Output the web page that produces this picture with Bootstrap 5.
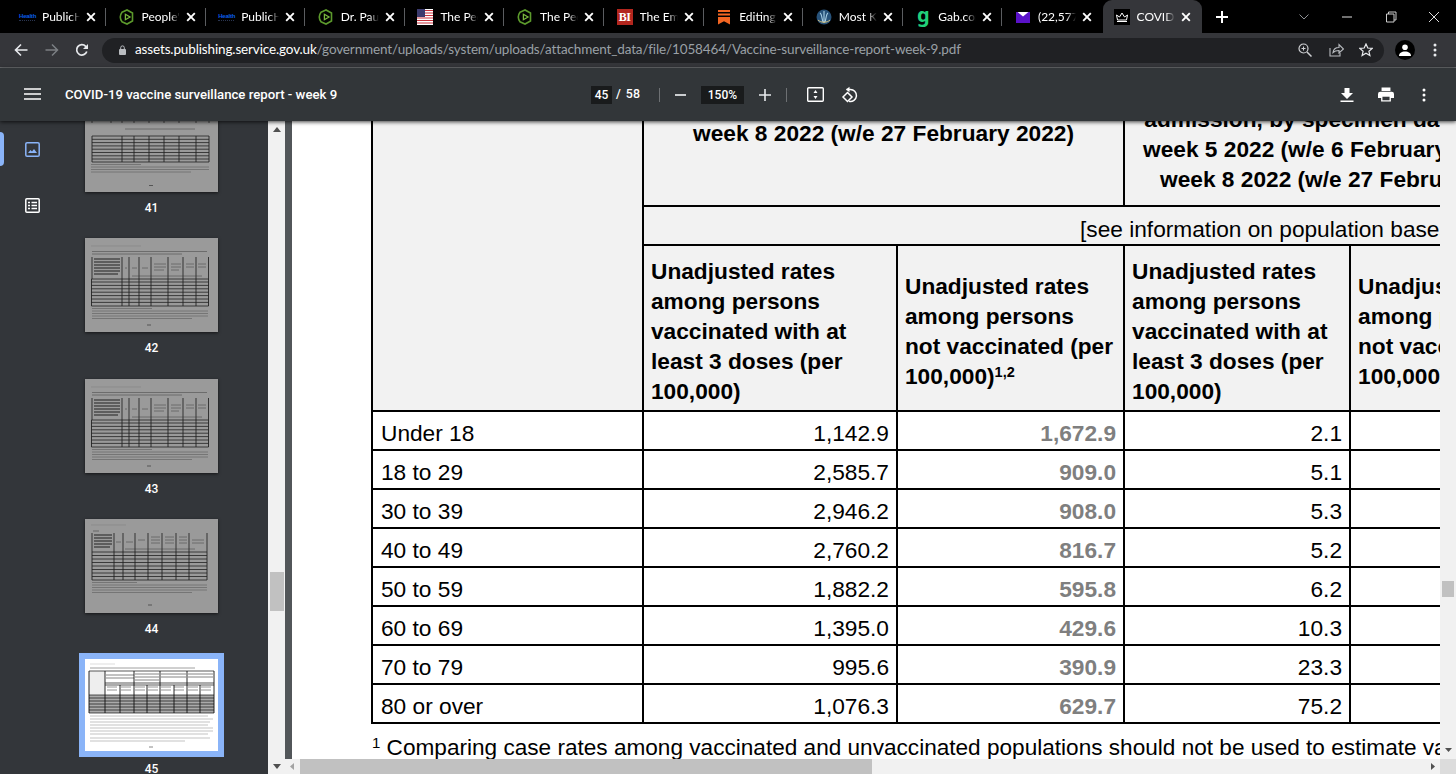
<!doctype html>
<html lang="en">
<head>
<meta charset="utf-8">
<title>COVID-19 vaccine surveillance report - week 9</title>
<link href="https://cdn.jsdelivr.net/npm/bootstrap@5.3.0/dist/css/bootstrap.min.css" rel="stylesheet">
<style>
html,body{height:100%;overflow:hidden;background:#000}
.shell{width:1456px;height:774px;overflow:hidden}
.tabbar{height:33px;background:#000;padding-left:8px;font:12px/1 "Lato",sans-serif;color:#fff}
.tabitem{width:99.6px;height:33px;padding-left:11px;flex:none}
.tabfav{width:16px;height:16px;flex:none;display:block}
.tabname{width:38px;margin-left:7px;margin-right:5px;overflow:hidden;white-space:nowrap;flex:none;-webkit-mask-image:linear-gradient(90deg,#000 74%,transparent);mask-image:linear-gradient(90deg,#000 74%,transparent)}
.tabx{width:12px;height:12px;flex:none}
.tabsep{width:1px;height:18px;background:#5b5d60;margin-left:8px;flex:none}
.tabactive{background:#35363a;border-radius:9px 9px 0 0;margin-left:-1px}
.healthfav{font:700 6px/1 "Liberation Sans",sans-serif;color:#0a5ce6;border-bottom:1px dotted #2a3550;height:8px;width:16px;text-align:center;letter-spacing:-.2px}
.bifav{background:#b3261e;color:#fff;font:700 12px/16px "Liberation Serif",serif;text-align:center;letter-spacing:-.5px}
.gabfav{color:#21d07a;font:700 20px/11px "Noto Sans",sans-serif;text-align:center;height:16px}
.newtab{width:14px;height:14px;margin-left:13px}
.winctl{width:174px;margin-left:auto;flex:none}
.winctl span{width:43.5px;display:flex;justify-content:center}
.addrbar{height:35px;background:#35363a;border-bottom:1px solid #6b6d70;padding:0 19px 0 14px}
.pill{height:25px;background:#202124;border-radius:13px;margin:0 11px 0 13px;padding:0 11px 0 17px;font:13.5px/1 "Lato",sans-serif;letter-spacing:-.134px;color:#fff;min-width:0}
.urlhost{color:#fff}.urlpath{color:#9aa0a6}
.urltext{margin-left:9px;white-space:nowrap}
.gapa{margin-left:17px}.gapb{margin-left:16px}.gapc{margin-left:15px}
.avatar{width:20px;height:20px;border-radius:50%;background:#000;flex:none}
.kebabtop{margin-left:18px}
.pdfbar{height:53px;background:#323639;color:#fff;font:500 13.2px/1 Roboto,sans-serif;position:relative;z-index:5;box-shadow:0 1px 4px rgba(0,0,0,.75);padding-left:24px}
.pdfleft{width:567px;flex:none}
.pdftitle{margin-left:24px;white-space:nowrap}
.numbox{background:#191b1c;height:18px;display:flex;align-items:center;justify-content:center;font-size:12px}
.boxpage{width:21px}.boxzoom{width:43px}
.pgsep{width:1px;height:14px;background:#6d7073}
.pdfctr{white-space:nowrap;font-size:12.4px}
.slasha{margin-left:4px}.slashb{margin-left:5px}
.sepa{margin-left:19px;margin-right:15px}
.minusa{margin-right:15px}
.plusa{margin-left:15px}
.sepb{margin-left:15px}
.fita{margin-left:20px}
.rota{margin-left:17px}
.pdfright{margin-left:auto;padding-right:30px}
.pdfprint{margin-left:24px}
.pdfkebab{margin-left:28px}
.workarea{height:653px}
.rail{width:85px;flex:none}
.sidepane{width:268px;background:#33363a;overflow:hidden;flex:none}
.railitem{height:56px;padding-left:25px;position:relative}
.railon::before{content:"";position:absolute;left:0;top:11px;width:4px;height:34px;background:#8ab4f8;border-radius:0 4px 4px 0}
.thumbcol{width:133px;margin-top:-23px;flex:none}
.thumbcell{height:140.3px;color:#fff;text-align:center;font:500 12px/1 Roboto,sans-serif}
.thumbsheet{display:block;width:133px;height:94px;box-shadow:0 1px 3px rgba(0,0,0,.6);filter:blur(.3px)}
.thumblabel{margin-top:10px}
.thumbpick{box-shadow:0 0 0 6px #8ab4f8;height:92px;filter:none}
.thumbpick+.thumblabel{margin-top:12px}
.sidescroll{width:17px;background:#f1f1f1;flex:none}
.arrowup{margin-top:6px}
.sidethumb{width:14px;height:39px;background:#c1c1c1;margin:440px auto 0}
.arrowdn{margin-top:auto;margin-bottom:5px}
.viewer{min-width:0;background:#525659}
.viewertop{height:638px;min-height:0}
.docgap{width:7px;flex:none}
.docpage{width:1148px;background:#fff;overflow:hidden;flex:none;padding-left:79px;font-family:"Liberation Sans",Arial,sans-serif;color:#000}
.doctable{width:1600px;table-layout:fixed;border-collapse:collapse;margin:-19px 0 0;font-size:22.7px;line-height:30px}
.doctable td,.doctable th{border:2px solid #000;padding:0 8px;background:#fff;box-shadow:none;color:#000}
.doctable thead th{background:#f2f2f2;font-weight:700;vertical-align:middle;text-align:left}
.doctable tbody td{height:39px;padding:6px 8px 0;vertical-align:middle;line-height:31px}
.doctable th.hdrtop{text-align:center;vertical-align:top;white-space:nowrap;padding:14px 0 0;height:103px}
.doctable th.hdrtopb{padding-top:0}
.doctable th.hdrbase{height:39px;padding:7px 0 0 436px;font-weight:400;white-space:nowrap;overflow:hidden}
.doctable th.hdrrate{height:166px;padding:6px 8px 0 7px}
.doctable td.numcell{text-align:right;padding-right:7px}
.doctable td.greycell{text-align:right;padding-right:7px;font-weight:700;color:#7f7f7f}
.doctable sup{font-size:14.5px;line-height:0}
.docnote{font-size:22.6px;line-height:30px;white-space:nowrap;margin-top:9px;padding-left:1px}
.docnote sup{font-size:15px}
.mainscroll{width:16px;background:#f1f1f1;flex:none}
.mainthumb{width:12px;height:16px;background:#c1c1c1;margin:460px auto 0}
.arrowdnb{margin-top:auto;margin-bottom:7px}
.hscroll{height:15px;background:#f1f1f1}
.hleft{margin-left:5px}
.hthumb{width:572px;height:15px;background:#c1c1c1;margin-left:6px}
.hright{margin-left:auto;margin-right:5px}
.hcorner{width:16px;height:15px;background:#dcdcdc;flex:none}
svg{display:block;flex:none}
</style>
</head>
<body>
<svg width="0" height="0" class="position-absolute">
<defs>
<symbol id="favplay" viewBox="0 0 16 16"><path d="M3 3.200 8 1l5.500 3v8L8 15l-5-2.200C1 10 1 6 3 3.200Z" fill="none" stroke="#5c9a2c" stroke-width="1.600"/><path d="M6.400 5.300 11 8l-4.600 2.700Z" fill="none" stroke="#79b83e" stroke-width="1.300"/></symbol>
<symbol id="closex" viewBox="0 0 12 12"><path d="M2.200 2.200 9.800 9.800M9.800 2.200 2.200 9.800" stroke="#fff" stroke-width="1.900"/></symbol>
<symbol id="sheeta" viewBox="0 0 133 94">
<rect width="133" height="94" fill="#9a9a9a"/>
<path d="M6 8h50" stroke="#8b8b8b"/>
<path d="M7 13.500h115M7 16h90" stroke="#666" stroke-width=".9"/>
<path d="M9 21h26M9 24h26M9 27h26M9 30h26M9 33h26M9 36h24" stroke="#4a4a4a" stroke-width="1.300"/>
<path d="M40 30h2M47 30h5M57 30h6M69 26h12M69 29h12M69 32h10M86 26h10M86 29h10M86 32h8M101 26h8M101 29h8M113 26h8M113 29h8M47 38h70" stroke="#666" stroke-width=".9"/>
<path d="M7 19v22M37 19v22M44 19v22M54 19v22M66 19v22M83 19v22M98 19v22M111 19v22M123.500 19v22" stroke="#333" stroke-width="1"/>
<path d="M6.500 41h117M6.500 44h117M6.500 47.400h117M6.500 50.800h117M6.500 54.200h117M6.500 57.600h117M6.500 61h117M6.500 64.400h117M6.500 68h117" stroke="#222" stroke-width=".8"/>
<path d="M6.500 41v27M37 41v27M44 41v27M54 41v27M66 41v27M83 41v27M98 41v27M111 41v27M123.500 41v27" stroke="#222" stroke-width=".9"/>
<path d="M7 70.500h60M7 73h116M7 75.500h116M7 78h116M7 80.500h100" stroke="#6c6c6c" stroke-width=".8"/>
<path d="M62 87h4" stroke="#555"/>
</symbol>
<symbol id="sheetb" viewBox="0 0 133 94">
<rect width="133" height="94" fill="#9a9a9a"/>
<path d="M7 0h117M7 11h117M26 7h98M7 22h117" stroke="#333" stroke-width=".8"/>
<path d="M9 4h15M9 7h15M9 14h15M29 14h6M40 14h7M52 14h10M67 14h10M82 14h10M97 14h12M114 14h8M40 31h70" stroke="#666" stroke-width=".9"/>
<path d="M7 0v25M26 0v25M37 0v25M49 0v25M64 0v25M79 0v25M94 0v25M111 0v25M124 0v25" stroke="#333" stroke-width=".8"/>
<path d="M7 38h117M7 41.300h117M7 44.600h117M7 47.900h117M7 51.200h117M7 54.500h117M7 57.800h117M7 61h117M7 64h117" stroke="#222" stroke-width=".8"/>
<path d="M7 38v26M37 38v26M49 38v26M64 38v26M79 38v26M94 38v26M111 38v26M124 38v26" stroke="#222" stroke-width=".9"/>
<path d="M6 66.500h50M6 69h118M6 71.500h118M6 74h100" stroke="#6c6c6c" stroke-width=".8"/>
<path d="M64 87.500h4" stroke="#555"/>
</symbol>
<symbol id="sheetc" viewBox="0 0 133 94">
<rect width="133" height="94" fill="#9a9a9a"/>
<path d="M6 6h35" stroke="#8b8b8b"/>
<path d="M8 12h6" stroke="#666"/>
<path d="M9 16h18M9 19h18M9 22h18M9 25h18M9 28h16" stroke="#4a4a4a" stroke-width="1.300"/>
<path d="M31 23h5M41 23h7M53 21h7M66 18h9M66 21h9M66 24h9M80 18h9M80 21h9M80 24h9M94 18h8M94 21h8M94 24h8M107 21h12M107 24h12M40 30h70" stroke="#666" stroke-width=".9"/>
<path d="M7 14v19M29 14v19M38 14v19M50 14v19M63 14v19M77 14v19M91 14v19M104 14v19M122 14v19" stroke="#333" stroke-width="1"/>
<path d="M7 33h115M7 36.500h115M7 40h115M7 43.500h115M7 47h115M7 50.500h115M7 54h115M7 57.500h115M7 61h115" stroke="#222" stroke-width=".8"/>
<path d="M7 33v28M29 33v28M38 33v28M50 33v28M63 33v28M77 33v28M91 33v28M104 33v28M122 33v28" stroke="#222" stroke-width=".9"/>
<path d="M7 63.500h45M7 66h115M7 68.500h115M7 71h115M7 73.500h100" stroke="#6c6c6c" stroke-width=".8"/>
<path d="M63 86h4" stroke="#555"/>
</symbol>
</defs>
</svg>

<div class="shell d-flex flex-column">
  <!-- Tab strip -->
  <div class="tabbar d-flex align-items-center">
    <div class="tabitem d-flex align-items-center"><div class="tabfav d-flex align-items-center"><div class="healthfav">Health</div></div><span class="tabname">PublicH</span><svg class="tabx"><use href="#closex"/></svg><span class="tabsep"></span></div>
    <div class="tabitem d-flex align-items-center"><svg class="tabfav"><use href="#favplay"/></svg><span class="tabname">People's</span><svg class="tabx"><use href="#closex"/></svg><span class="tabsep"></span></div>
    <div class="tabitem d-flex align-items-center"><div class="tabfav d-flex align-items-center"><div class="healthfav">Health</div></div><span class="tabname">PublicH</span><svg class="tabx"><use href="#closex"/></svg><span class="tabsep"></span></div>
    <div class="tabitem d-flex align-items-center"><svg class="tabfav"><use href="#favplay"/></svg><span class="tabname">Dr. Paul</span><svg class="tabx"><use href="#closex"/></svg><span class="tabsep"></span></div>
    <div class="tabitem d-flex align-items-center"><svg class="tabfav" viewBox="0 0 16 16"><rect width="16" height="16" fill="#fff"/><path d="M0 1.500h16M0 4h16M0 6.500h16M0 9h16M0 11.500h16M0 14h16" stroke="#c8323c" stroke-width="1.200"/><rect width="8" height="8" fill="#3c3b6e"/></svg><span class="tabname">The Peo</span><svg class="tabx"><use href="#closex"/></svg><span class="tabsep"></span></div>
    <div class="tabitem d-flex align-items-center"><svg class="tabfav"><use href="#favplay"/></svg><span class="tabname">The Peo</span><svg class="tabx"><use href="#closex"/></svg><span class="tabsep"></span></div>
    <div class="tabitem d-flex align-items-center"><div class="tabfav bifav">BI</div><span class="tabname">The Emp</span><svg class="tabx"><use href="#closex"/></svg><span class="tabsep"></span></div>
    <div class="tabitem d-flex align-items-center"><svg class="tabfav" viewBox="0 0 16 16"><path d="M2 1h12v2H2ZM2 4.500h12v2H2ZM2 8h12v7.500l-6-3.300-6 3.300Z" fill="#f26522"/></svg><span class="tabname">Editing</span><svg class="tabx"><use href="#closex"/></svg><span class="tabsep"></span></div>
    <div class="tabitem d-flex align-items-center"><svg class="tabfav" viewBox="0 0 16 16"><circle cx="8" cy="8" r="7.500" fill="#27527a"/><path d="M4 4c2 1 2 7 3 9M8 2v12M12 4c-2 1-2 7-3 9" stroke="#a9cfe6" stroke-width="1.100" fill="none"/><path d="M2 11c3 3 9 3 12 0" stroke="#d8c27a" fill="none"/></svg><span class="tabname">Most Ki</span><svg class="tabx"><use href="#closex"/></svg><span class="tabsep"></span></div>
    <div class="tabitem d-flex align-items-center"><div class="tabfav gabfav">g</div><span class="tabname">Gab.com</span><svg class="tabx"><use href="#closex"/></svg><span class="tabsep"></span></div>
    <div class="tabitem d-flex align-items-center"><svg class="tabfav" viewBox="0 0 16 16"><rect x="1" y="3" width="14" height="11" fill="#5a12c9"/><path d="M2.500 3h11L8 7.500Z" fill="#fff"/></svg><span class="tabname">(22,577</span><svg class="tabx"><use href="#closex"/></svg></div>
    <div class="tabitem tabactive d-flex align-items-center"><svg class="tabfav" viewBox="0 0 16 16"><rect width="16" height="16" fill="#000"/><path d="M3 12.500h10M3.500 11 2.500 6l3 2L8 4l2.500 4 3-2-1 5Z" fill="none" stroke="#fff" stroke-width="1"/></svg><span class="tabname">COVID-19</span><svg class="tabx"><use href="#closex"/></svg></div>
    <svg class="newtab" viewBox="0 0 14 14"><path d="M7 1v12M1 7h12" stroke="#fff" stroke-width="2"/></svg>
    <div class="winctl d-flex align-items-center">
      <span><svg width="12" height="8" viewBox="0 0 12 8"><path d="M1.500 1.500 6 6l4.500-4.500" fill="none" stroke="#8e9195" stroke-width="1"/></svg></span>
      <span><svg width="12" height="2" viewBox="0 0 12 2"><path d="M1 1h10" stroke="#bbb" stroke-width="1.200"/></svg></span>
      <span><svg width="12" height="12" viewBox="0 0 12 12"><path d="M1.500 3h7.500v8H1.500ZM3.500 3V1H11v8H9" fill="none" stroke="#ccc" stroke-width="1"/></svg></span>
      <span><svg width="12" height="12" viewBox="0 0 12 12"><path d="M1 1l10 10M11 1 1 11" stroke="#ddd" stroke-width="1"/></svg></span>
    </div>
  </div>

  <!-- Address bar -->
  <div class="addrbar d-flex align-items-center">
    <svg width="14" height="14" viewBox="0 0 14 14"><path d="M13.500 7H1.500M7 1.500 1.500 7 7 12.500" fill="none" stroke="#e8eaed" stroke-width="1.600"/></svg>
    <svg class="gapa" width="14" height="14" viewBox="0 0 14 14"><path d="M.5 7h12M7 1.500 12.500 7 7 12.500" fill="none" stroke="#7c7f83" stroke-width="1.500"/></svg>
    <svg class="gapb" width="14" height="14" viewBox="0 0 14 14"><path d="M11.800 8.500A5.200 5.200 0 1 1 10.700 3.300L12.500 5" fill="none" stroke="#e8eaed" stroke-width="1.700"/><path d="M13 1v5H8Z" fill="#e8eaed"/></svg>
    <div class="pill d-flex align-items-center flex-grow-1">
      <svg width="7" height="10" viewBox="0 0 7 10"><rect y="4" width="7" height="6" rx="1" fill="#b9bcc0"/><path d="M1.700 4.500V2.700a1.800 1.800 0 0 1 3.600 0v1.800" fill="none" stroke="#b9bcc0" stroke-width="1"/></svg>
      <span class="urltext"><span class="urlhost">assets.publishing.service.gov.uk</span><span class="urlpath">/government/uploads/system/uploads/attachment_data/file/1058464/Vaccine-surveillance-report-week-9.pdf</span></span>
      <svg class="ms-auto" width="14" height="14" viewBox="0 0 14 14"><circle cx="5.500" cy="5.500" r="4.500" fill="none" stroke="#cfd1d4" stroke-width="1.200"/><path d="M9 9l4.500 4.500" stroke="#cfd1d4" stroke-width="1.500"/><path d="M3.500 5.500h4M5.500 3.500v4" stroke="#cfd1d4"/></svg>
      <svg class="gapa" width="15" height="14" viewBox="0 0 15 14"><path d="M1 5v8h10v-3" fill="none" stroke="#b9bcc0" stroke-width="1.100"/><path d="M4 9.500c.5-3.500 3-5 6-5V1.500l4.500 4.500-4.500 4V7.500c-2.500 0-4.500.5-6 2Z" fill="none" stroke="#b9bcc0" stroke-width="1.100"/></svg>
      <svg class="gapc" width="14" height="14" viewBox="0 0 14 14"><path d="M7 1l1.800 4 4.400.4-3.300 2.900 1 4.300L7 10.300l-3.900 2.300 1-4.300L.8 5.400 5.200 5Z" fill="none" stroke="#e8eaed" stroke-width="1.200"/></svg>
    </div>
    <div class="avatar d-flex align-items-center justify-content-center"><svg width="12" height="12" viewBox="0 0 12 12"><circle cx="6" cy="3.200" r="2.800" fill="#fff"/><path d="M0 12c0-3 2.500-4.500 6-4.500s6 1.500 6 4.500Z" fill="#fff"/></svg></div>
    <svg class="kebabtop" width="4" height="14" viewBox="0 0 4 14"><circle cx="2" cy="2" r="1.500" fill="#e8eaed"/><circle cx="2" cy="7" r="1.500" fill="#e8eaed"/><circle cx="2" cy="12" r="1.500" fill="#e8eaed"/></svg>
  </div>

  <!-- PDF toolbar -->
  <div class="pdfbar d-flex align-items-center">
    <div class="pdfleft d-flex align-items-center">
      <svg width="17" height="12" viewBox="0 0 17 12"><path d="M0 1h17M0 6h17M0 11h17" stroke="#fff" stroke-width="1.700"/></svg>
      <span class="pdftitle">COVID-19 vaccine surveillance report - week 9</span>
    </div>
    <div class="pdfctr d-flex align-items-center">
      <span class="numbox boxpage">45</span>
      <span class="slasha">/</span><span class="slashb">58</span>
      <span class="pgsep sepa"></span>
      <svg class="minusa" width="11" height="2" viewBox="0 0 11 2"><path d="M0 1h11" stroke="#e8eaed" stroke-width="1.700"/></svg>
      <span class="numbox boxzoom">150%</span>
      <svg class="plusa" width="12" height="12" viewBox="0 0 12 12"><path d="M6 0v12M0 6h12" stroke="#e8eaed" stroke-width="1.600"/></svg>
      <span class="pgsep sepb"></span>
      <svg class="fita" width="17" height="15" viewBox="0 0 17 15"><rect x=".7" y=".7" width="15.600" height="13.600" rx="1" fill="none" stroke="#fff" stroke-width="1.400"/><path d="M8.500 3 6.500 6h4ZM8.500 12l-2-3h4Z" fill="#fff"/></svg>
      <svg class="rota" width="18" height="18" viewBox="0 0 18 18"><path d="M5.500 3.500h3.500a6 6 0 1 1-1 11.800" fill="none" stroke="#fff" stroke-width="1.500"/><path d="M8.500 .8v5.400L5 3.500Z" fill="#fff"/><path d="M6.500 6.500 11 11l-4.500 4.500L2 11Z" fill="none" stroke="#fff" stroke-width="1.500"/></svg>
    </div>
    <div class="pdfright d-flex align-items-center">
      <svg width="14" height="14" viewBox="0 0 14 14"><path d="M4.500 0h5v5h3.500L7 11 1 5h3.500ZM.5 12.500h13V14H.5Z" fill="#fff"/></svg>
      <svg class="pdfprint" width="16" height="15" viewBox="0 0 18 16"><path d="M4 0h10v4H4ZM2.500 5h13A2.500 2.500 0 0 1 18 7.500V12h-3.500v4h-11v-4H0V7.500A2.500 2.500 0 0 1 2.500 5Z" fill="#fff"/><rect x="5" y="10.500" width="8" height="4" fill="#323639"/></svg>
      <svg class="pdfkebab" width="4" height="14" viewBox="0 0 4 14"><circle cx="2" cy="2" r="1.500" fill="#fff"/><circle cx="2" cy="7" r="1.500" fill="#fff"/><circle cx="2" cy="12" r="1.500" fill="#fff"/></svg>
    </div>
  </div>

  <!-- Work area -->
  <div class="workarea d-flex">
    <aside class="sidepane d-flex">
      <nav class="rail">
        <div class="railitem railon d-flex align-items-center"><svg width="15" height="15" viewBox="0 0 15 15"><rect x=".8" y=".8" width="13.400" height="13.400" rx="1.300" fill="none" stroke="#8ab4f8" stroke-width="1.500"/><path d="M3 11l2.500-3 1.500 1.500L9 7l3 4Z" fill="#8ab4f8"/></svg></div>
        <div class="railitem d-flex align-items-center"><svg width="15" height="15" viewBox="0 0 15 15"><rect x=".8" y=".8" width="13.400" height="13.400" rx="1" fill="none" stroke="#fff" stroke-width="1.500"/><path d="M3 4.500h2M6.500 4.500H12M3 7.500h2M6.500 7.500H12M3 10.500h2M6.500 10.500H12" stroke="#fff" stroke-width="1.400"/></svg></div>
      </nav>
      <div class="thumbcol">
        <div class="thumbcell"><svg class="thumbsheet"><use href="#sheetb"/></svg><div class="thumblabel">41</div></div>
        <div class="thumbcell"><svg class="thumbsheet"><use href="#sheeta"/></svg><div class="thumblabel">42</div></div>
        <div class="thumbcell"><svg class="thumbsheet"><use href="#sheeta"/></svg><div class="thumblabel">43</div></div>
        <div class="thumbcell"><svg class="thumbsheet"><use href="#sheetc"/></svg><div class="thumblabel">44</div></div>
        <div class="thumbcell">
          <svg class="thumbsheet thumbpick" viewBox="0 0 133 92">
            <rect width="133" height="92" fill="#fff"/>
            <path d="M5 5h25" stroke="#ddd"/><path d="M5 9h105" stroke="#888" stroke-width=".8"/>
            <rect x="4" y="12" width="16" height="24" fill="#eee"/>
            <path d="M21 16h28M21 19h28M50 15h24M50 18h24M50 21h24M76 15h25M76 18h25M103 15h25M103 18h25" stroke="#777" stroke-width=".9"/>
            <path d="M22 28h10M36 28h10M50 28h10M63 28h10M76 28h10M89 28h10M103 28h10M116 28h10M22 31h10M36 31h10M50 31h10M63 31h10M76 31h10M89 31h10M103 31h10M116 31h10" stroke="#888" stroke-width=".9"/>
            <rect x="4" y="36" width="125" height="18" fill="#aaa"/>
            <path d="M4 12h125M20 24h109M20 26h109M4 36h125M4 39h125M4 42h125M4 45h125M4 48h125M4 51h125M4 54h125" stroke="#111" stroke-width=".7"/>
            <path d="M4 12v42M20 12v42M49 12v42M75 12v42M102 12v42M129 12v42M35 26v28M62 26v28M89 26v28M115 26v28" stroke="#111" stroke-width=".9"/>
            <path d="M5 57h118M5 60h123M5 63h120M5 66h118M5 69h123M5 72h123M5 75h118M5 79h120M5 82h95" stroke="#aaa" stroke-width=".7"/>
            <path d="M64 88h4" stroke="#888"/>
          </svg>
          <div class="thumblabel">45</div>
        </div>
      </div>
    </aside>
    <div class="sidescroll d-flex flex-column">
      <svg class="arrowup mx-auto" width="8" height="5" viewBox="0 0 8 5"><path d="M4 0 8 5H0Z" fill="#505050"/></svg>
      <div class="sidethumb"></div>
      <svg class="arrowdn mx-auto" width="8" height="5" viewBox="0 0 8 5"><path d="M4 5 0 0h8Z" fill="#505050"/></svg>
    </div>
    <div class="viewer flex-grow-1 d-flex flex-column">
      <div class="viewertop d-flex">
        <div class="docgap"></div>
        <main class="docpage">
          <table class="table doctable">
            <colgroup><col style="width:271px"><col style="width:254px"><col style="width:227px"><col style="width:226px"><col style="width:227px"><col style="width:395px"></colgroup>
            <thead>
              <tr>
                <th rowspan="3"></th>
                <th colspan="2" class="hdrtop">week 8 2022 (w/e 27 February 2022)</th>
                <th colspan="2" class="hdrtop hdrtopb">admission, by specimen date between<br>week 5 2022 (w/e 6 February 2022) and<br>week 8 2022 (w/e 27 February 2022)</th>
                <th></th>
              </tr>
              <tr><th colspan="5" class="hdrbase">[see information on population bases]</th></tr>
              <tr>
                <th class="hdrrate">Unadjusted rates among persons vaccinated with at least 3 doses (per 100,000)</th>
                <th class="hdrrate">Unadjusted rates among persons<br>not vaccinated (per 100,000)<sup>1,2</sup></th>
                <th class="hdrrate">Unadjusted rates among persons vaccinated with at least 3 doses (per 100,000)</th>
                <th class="hdrrate">Unadjusted rates among persons<br>not vaccinated (per 100,000)<sup>1,2</sup></th>
                <th class="hdrrate"></th>
              </tr>
            </thead>
            <tbody>
              <tr><td>Under 18</td><td class="numcell">1,142.9</td><td class="greycell">1,672.9</td><td class="numcell">2.1</td><td></td><td></td></tr>
              <tr><td>18 to 29</td><td class="numcell">2,585.7</td><td class="greycell">909.0</td><td class="numcell">5.1</td><td></td><td></td></tr>
              <tr><td>30 to 39</td><td class="numcell">2,946.2</td><td class="greycell">908.0</td><td class="numcell">5.3</td><td></td><td></td></tr>
              <tr><td>40 to 49</td><td class="numcell">2,760.2</td><td class="greycell">816.7</td><td class="numcell">5.2</td><td></td><td></td></tr>
              <tr><td>50 to 59</td><td class="numcell">1,882.2</td><td class="greycell">595.8</td><td class="numcell">6.2</td><td></td><td></td></tr>
              <tr><td>60 to 69</td><td class="numcell">1,395.0</td><td class="greycell">429.6</td><td class="numcell">10.3</td><td></td><td></td></tr>
              <tr><td>70 to 79</td><td class="numcell">995.6</td><td class="greycell">390.9</td><td class="numcell">23.3</td><td></td><td></td></tr>
              <tr><td>80 or over</td><td class="numcell">1,076.3</td><td class="greycell">629.7</td><td class="numcell">75.2</td><td></td><td></td></tr>
            </tbody>
          </table>
          <p class="docnote"><sup>1</sup> Comparing case rates among vaccinated and unvaccinated populations should not be used to estimate vaccine effectiveness</p>
        </main>
        <div class="mainscroll d-flex flex-column">
          <div class="mainthumb"></div>
          <svg class="arrowdnb mx-auto" width="7" height="4" viewBox="0 0 7 4"><path d="M3.500 4 0 0h7Z" fill="#505050"/></svg>
        </div>
      </div>
      <div class="hscroll d-flex align-items-center">
        <svg class="hleft" width="4" height="7" viewBox="0 0 4 7"><path d="M0 3.500 4 0v7Z" fill="#a3a3a3"/></svg>
        <div class="hthumb"></div>
        <svg class="hright" width="4" height="7" viewBox="0 0 4 7"><path d="M4 3.500 0 0v7Z" fill="#505050"/></svg>
        <div class="hcorner"></div>
      </div>
    </div>
  </div>
</div>
<script src="https://cdn.jsdelivr.net/npm/bootstrap@5.3.0/dist/js/bootstrap.bundle.min.js"></script>
</body>
</html>
